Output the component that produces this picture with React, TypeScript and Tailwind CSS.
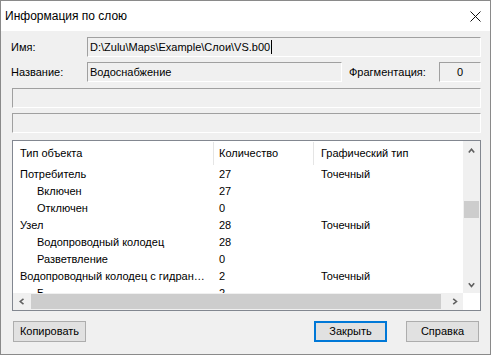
import React from 'react'

type Row = { name: string; count: string; kind?: string; child?: boolean }

const rows: Row[] = [
  { name: 'Потребитель', count: '27', kind: 'Точечный' },
  { name: 'Включен', count: '27', child: true },
  { name: 'Отключен', count: '0', child: true },
  { name: 'Узел', count: '28', kind: 'Точечный' },
  { name: 'Водопроводный колодец', count: '28', child: true },
  { name: 'Разветвление', count: '0', child: true },
  { name: 'Водопроводный колодец с гидран…', count: '2', kind: 'Точечный' },
  { name: 'Б', count: '2', child: true },
]

// sunken read-only edit box, classic Win32 static edge
const field = 'h-[20px] bg-[#f0f0f0] border-t border-l border-b border-r border-t-[#a0a0a0] border-l-[#a0a0a0] border-b-white border-r-white'

function Chevron({ dir }: { dir: 'up' | 'down' | 'left' | 'right' }) {
  const pts = {
    up: '0.8,4.5 3.5,1.2 6.2,4.5',
    down: '0.8,1.2 3.5,4.5 6.2,1.2',
    left: '4.5,0.8 1.2,3.5 4.5,6.2',
    right: '1.2,0.8 4.5,3.5 1.2,6.2',
  }[dir]
  const vertical = dir === 'up' || dir === 'down'
  return (
    <svg
      width={vertical ? 7 : 6}
      height={vertical ? 6 : 7}
      viewBox={vertical ? '0 0 7 6' : '0 0 6 7'}
      fill="none"
      stroke="#606060"
      strokeWidth="1.6"
    >
      <polyline points={pts} />
    </svg>
  )
}

export default function App() {
  return (
    <div className="w-[491px] h-[355px] flex flex-col border border-[#8a8a8a] bg-[#f0f0f0] text-black font-['Liberation_Sans',Arial,sans-serif] text-[11px] overflow-hidden">
      {/* Title bar */}
      <div className="h-[30px] flex-shrink-0 bg-white flex items-center justify-between pl-[4px] pr-[9px]">
        <span className="text-[12px] font-['Liberation_Sans',sans-serif]">Информация по слою</span>
        <svg width="11" height="11" viewBox="0 0 11 11" stroke="#111" strokeWidth="1">
          <line x1="0.5" y1="0.5" x2="10.5" y2="10.5" />
          <line x1="10.5" y1="0.5" x2="0.5" y2="10.5" />
        </svg>
      </div>

      {/* Body */}
      <div className="flex-1 flex flex-col pl-[11px] pr-[9px] pt-[6px]">
        <div className="flex items-center h-[20px]">
          <span className="w-[76px] -ml-px">Имя:</span>
          <div className={`${field} flex-1 flex items-center pl-[2px]`}>
            <span>D:\Zulu\Maps\Example\Слои\VS.b00</span>
            <span className="w-px h-[14px] bg-black ml-px" />
          </div>
        </div>

        <div className="flex items-center h-[20px] mt-[5px]">
          <span className="w-[76px] -ml-px">Название:</span>
          <div className={`${field} w-[255px] flex items-center pl-[2px]`}>Водоснабжение</div>
          <span className="flex-1 pl-[7px]">Фрагментация:</span>
          <div className={`${field} w-[42px] flex items-center justify-center`}>0</div>
        </div>

        <div className={`${field} mt-[6px]`} />
        <div className={`${field} mt-[5px]`} />

        {/* List view */}
        <div className="mt-[7px] h-[171px] border border-[#828790] bg-white flex flex-col">
          <div className="flex h-[152px]">
            <div className="flex-1 overflow-hidden">
              <div className="grid grid-cols-[200px_100px_1fr] h-[25px]">
                <div className="flex items-center pl-[7px]">Тип объекта</div>
                <div className="flex items-center pl-[5px] border-l border-[#e5e5e5] my-px">Количество</div>
                <div className="flex items-center pl-[7px] border-l border-[#e5e5e5] my-px">Графический тип</div>
              </div>
              {rows.map((r, i) => (
                <div key={i} className="grid grid-cols-[200px_100px_1fr] h-[17px] items-center">
                  <div className={`whitespace-nowrap overflow-hidden ${r.child ? 'pl-[24px]' : 'pl-[7px]'}`}>{r.name}</div>
                  <div className="pl-[6px]">{r.count}</div>
                  <div className="pl-[8px]">{r.kind ?? ''}</div>
                </div>
              ))}
            </div>
            <div className="w-[17px] bg-[#f0f0f0] flex flex-col">
              <div className="h-[17px] flex items-center justify-center pt-[2px]">
                <Chevron dir="up" />
              </div>
              <div className="flex-1">
                <div className="mt-[43px] mx-px h-[17px] bg-[#cdcdcd]" />
              </div>
              <div className="h-[17px] flex items-center justify-center">
                <Chevron dir="down" />
              </div>
            </div>
          </div>
          <div className="flex h-[17px]">
            <div className="flex-1 flex bg-[#f0f0f0]">
              <div className="w-[17px] flex items-center justify-center">
                <Chevron dir="left" />
              </div>
              <div className="flex-1 py-px pl-px">
                <div className="w-[410px] h-full bg-[#cdcdcd]" />
              </div>
              <div className="w-[17px] flex items-center justify-center">
                <Chevron dir="right" />
              </div>
            </div>
            <div className="w-[17px] bg-white" />
          </div>
        </div>

        {/* Buttons */}
        <div className="flex items-center mt-[10px] h-[21px]">
          <button className="ml-px w-[73px] h-full bg-[#e1e1e1] border border-[#adadad] text-[11px]">Копировать</button>
          <div className="flex-1" />
          <button className="w-[73px] h-full bg-[#e1e1e1] border-2 border-[#0078d7] text-[11px]">Закрыть</button>
          <button className="ml-[19px] mr-[2px] w-[73px] h-full bg-[#e1e1e1] border border-[#adadad] text-[11px]">Справка</button>
        </div>
      </div>
    </div>
  )
}
